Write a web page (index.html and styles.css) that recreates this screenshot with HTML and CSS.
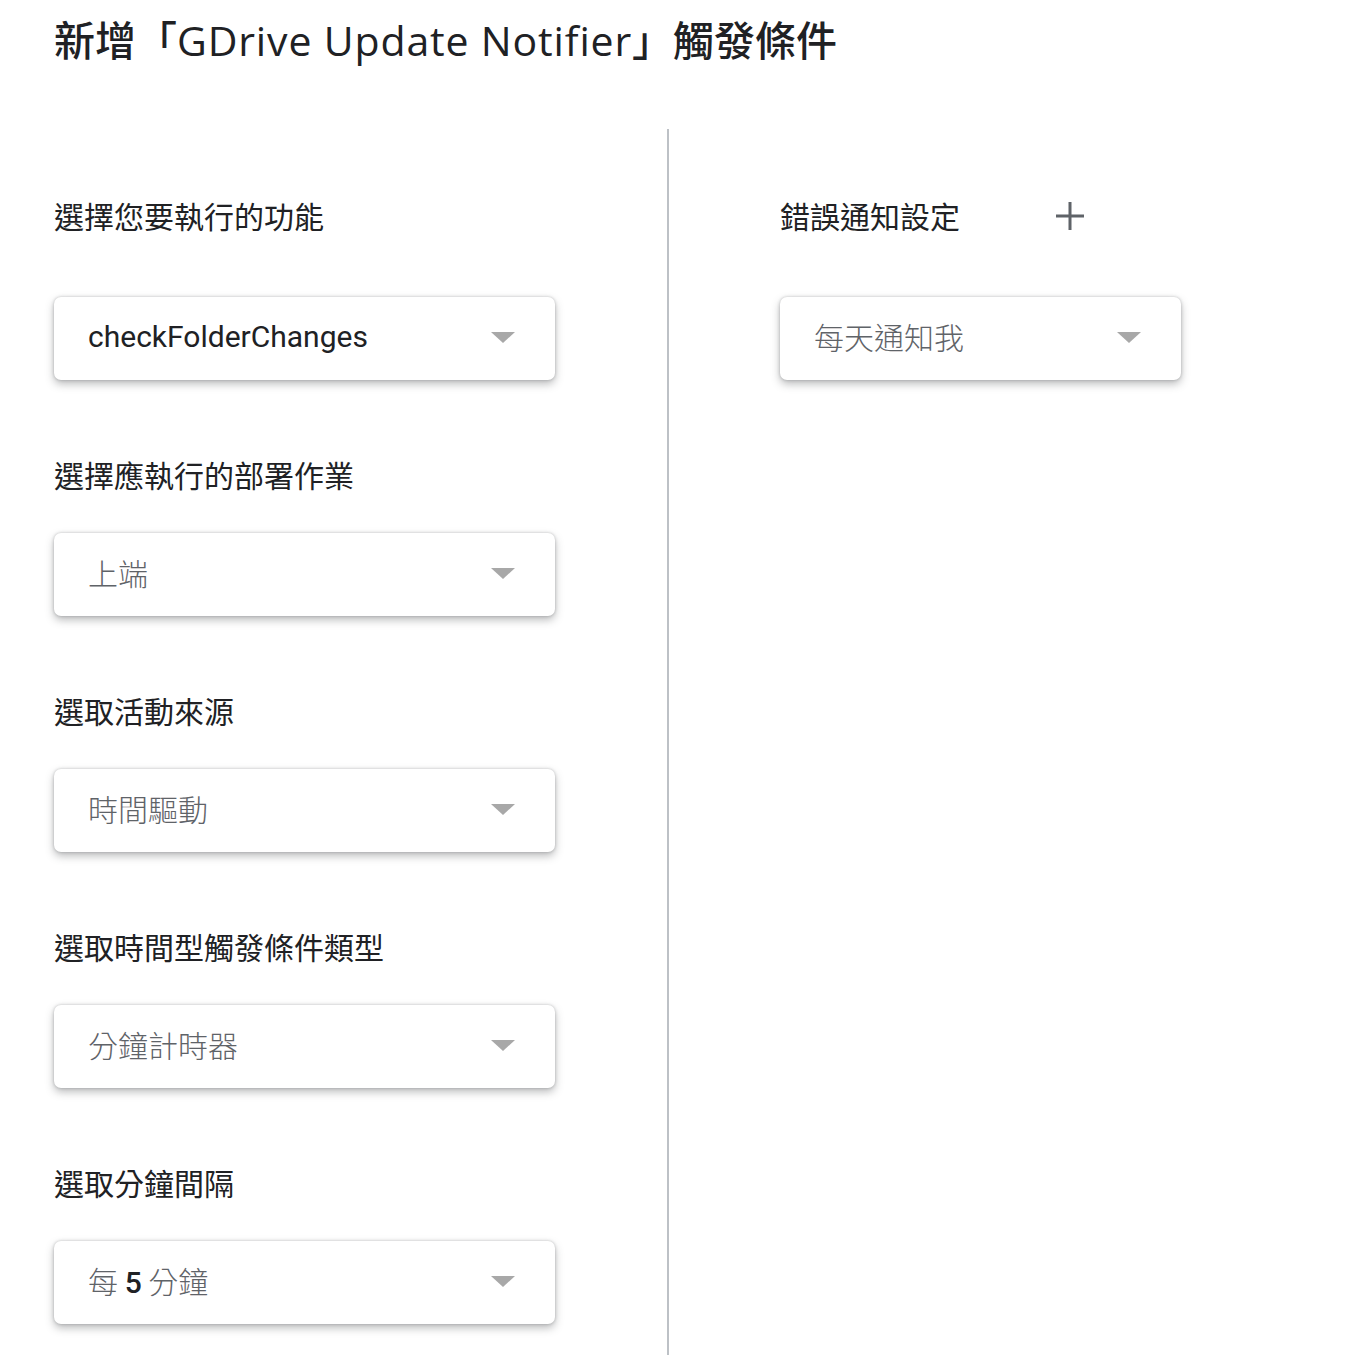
FILE: index.html
```html
<!DOCTYPE html>
<html lang="zh-Hant">
<head>
<meta charset="utf-8">
<title>新增觸發條件</title>
<link rel="stylesheet" href="styles.css">
</head>
<body>
<div class="page">
  <h1 class="title">新增「<span class="latin">GDrive Update Notifier</span>」觸發條件</h1>
  <div class="columns">
    <div class="col-left">
      <div class="field first">
        <div class="label">選擇您要執行的功能</div>
        <div class="select"><span class="value strong">checkFolderChanges</span><span class="arrow"></span></div>
      </div>
      <div class="field">
        <div class="label">選擇應執行的部署作業</div>
        <div class="select"><span class="value">上端</span><span class="arrow"></span></div>
      </div>
      <div class="field">
        <div class="label">選取活動來源</div>
        <div class="select"><span class="value">時間驅動</span><span class="arrow"></span></div>
      </div>
      <div class="field">
        <div class="label">選取時間型觸發條件類型</div>
        <div class="select"><span class="value">分鐘計時器</span><span class="arrow"></span></div>
      </div>
      <div class="field">
        <div class="label">選取分鐘間隔</div>
        <div class="select"><span class="value">每 <b class="num">5</b> 分鐘</span><span class="arrow"></span></div>
      </div>
    </div>
    <div class="divider"></div>
    <div class="col-right">
      <div class="field first">
        <div class="label label-row">錯誤通知設定
          <svg class="plus" width="30" height="30" viewBox="0 0 30 30" aria-hidden="true"><path d="M15 1v28M1 15h28" stroke="#5f6368" stroke-width="3" fill="none"/></svg>
        </div>
        <div class="select narrow"><span class="value">每天通知我</span><span class="arrow"></span></div>
      </div>
    </div>
  </div>
</div>
</body>
</html>
```
FILE: styles.css
```css
html, body {
  margin: 0;
  padding: 0;
  background: #ffffff;
}
body {
  font-family: Roboto, "Noto Sans CJK TC", sans-serif;
  color: #202124;
}
.page {
  padding: 14px 0 0 54px;
}
.title {
  margin: 0;
  font-family: "Open Sans", "Noto Sans CJK TC", sans-serif;
  font-weight: 500;
  font-size: 41px;
  line-height: 52px;
  height: 52px;
  color: #202124;
}
.title .latin {
  letter-spacing: 0.85px;
}
.columns {
  display: flex;
  margin-top: 63px;
  align-items: flex-start;
}
.col-left {
  width: 613px;
}
.divider {
  width: 2px;
  background: #bdc1c6;
  flex: none;
  height: 1226px;
}
.col-right {
  padding-left: 111px;
}
.field {
  padding-top: 76px;
}
.field.first {
  padding-top: 68px;
}
.label {
  font-family: "Noto Sans CJK TC", sans-serif;
  font-size: 30px;
  line-height: 36px;
  height: 36px;
  color: #202124;
}
.label-row {
  display: flex;
  align-items: center;
  gap: 95px;
}
.plus {
  display: block;
  margin-top: 2px;
}
.select {
  margin-top: 41px;
  width: 501px;
  height: 83px;
  box-sizing: border-box;
  background: #fff;
  border-radius: 7px;
  box-shadow: 0 0 3px rgba(60, 64, 67, 0.3), 0 4px 9px rgba(60, 64, 67, 0.35);
  display: flex;
  align-items: center;
  justify-content: space-between;
  padding: 0 40px 0 34px;
}
.field.first .select {
  margin-top: 64px;
}
.select.narrow {
  width: 401px;
}
.value {
  font-family: "Noto Sans CJK TC", sans-serif;
  font-weight: 300;
  font-size: 30px;
  color: #5f6368;
  margin-top: -5px;
}
.value.strong {
  font-family: Roboto, sans-serif;
  font-weight: 400;
  color: #202124;
}
.num {
  font-family: Roboto, sans-serif;
  font-weight: 500;
  color: #202124;
}
.arrow {
  width: 0;
  height: 0;
  border-left: 12px solid transparent;
  border-right: 12px solid transparent;
  border-top: 11px solid #a8a8a8;
  margin-top: -3px;
}
```
